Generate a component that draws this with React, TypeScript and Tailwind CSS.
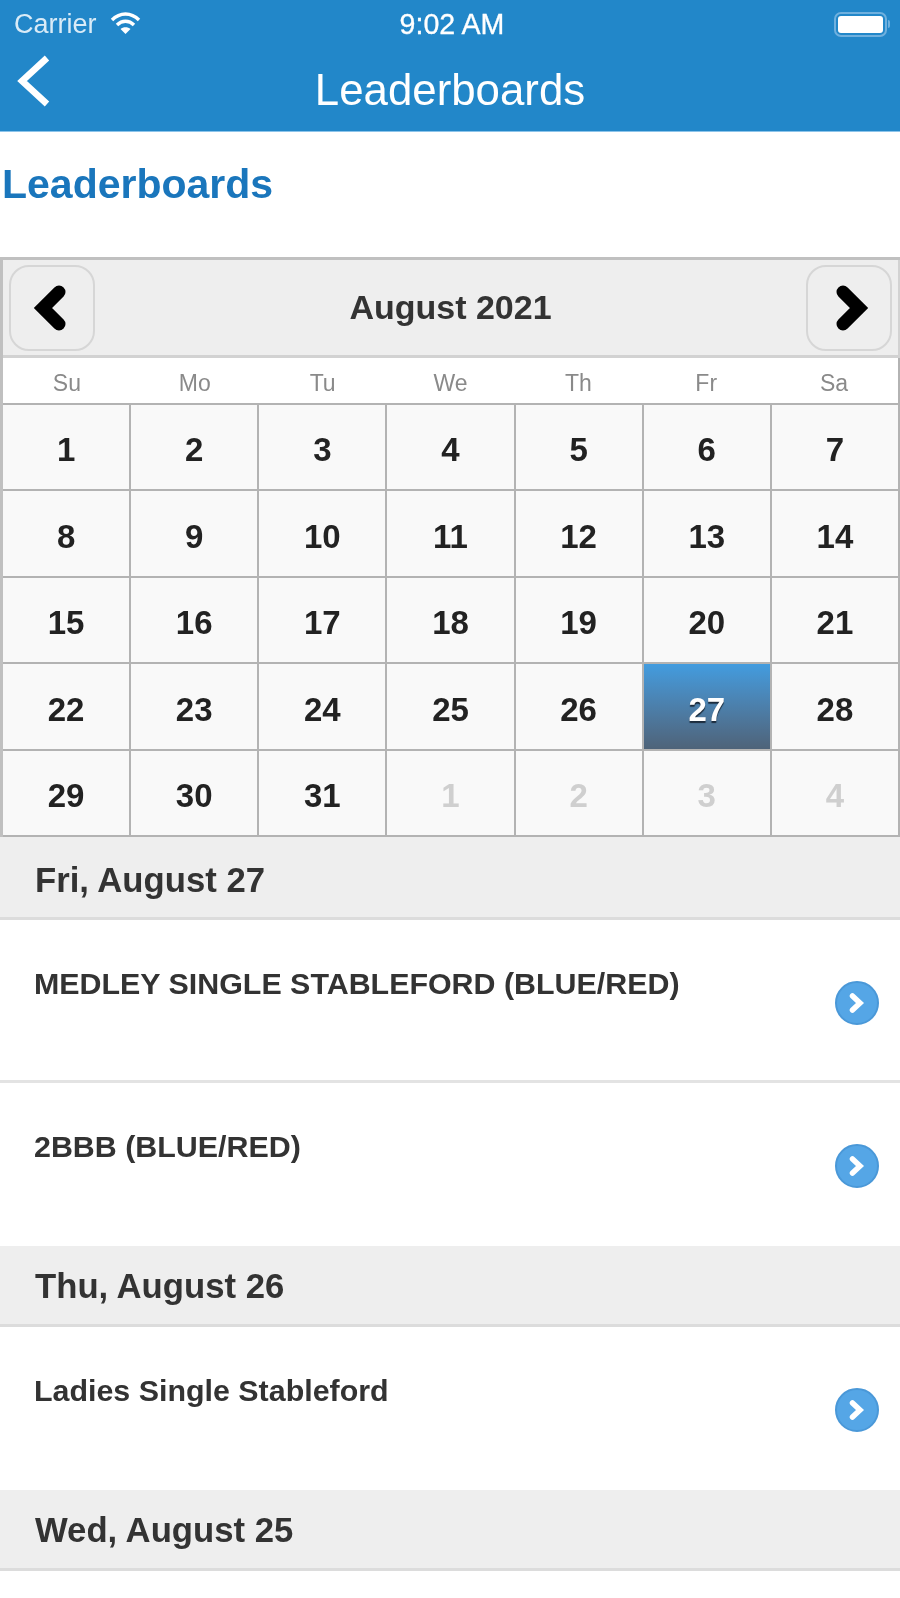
const FONT = "font-['Liberation_Sans',Arial,sans-serif]";

const WEEKDAYS = ["Su", "Mo", "Tu", "We", "Th", "Fr", "Sa"];

const DAYS = [
  ...Array.from({ length: 31 }, (_, i) => ({ label: i + 1, muted: false })),
  ...[1, 2, 3, 4].map((n) => ({ label: n, muted: true })),
];

function Chevron({ dir }: { dir: "left" | "right" }) {
  return (
    <svg width="40" height="52" viewBox="0 0 40 52" className={dir === "left" ? "-translate-x-[2px]" : "translate-x-[3px]"}>
      <path
        d={dir === "left" ? "M29 10 L13 26 L29 42" : "M11 10 L27 26 L11 42"}
        fill="none"
        stroke="#000"
        strokeWidth="13"
        strokeLinecap="round"
        strokeLinejoin="miter"
      />
    </svg>
  );
}

function Go() {
  return (
    <div className="flex h-[44px] w-[44px] items-center justify-center rounded-full border-2 border-[#4a98d8] bg-[#55a6e6]">
      <svg width="20" height="24" viewBox="0 0 20 24">
        <path d="M5.5 5 L13 12 L5.5 19" fill="none" stroke="#fff" strokeWidth="5.5" strokeLinecap="round" />
      </svg>
    </div>
  );
}

function SectionHead({ children, box }: { children: string; box: string }) {
  return (
    <div className={`flex items-center border-b-[3px] border-[#dcdcdc] bg-[#eeeeee] pl-[35px] text-[34.7px] font-bold text-[#333333] ${box}`}>
      {children}
    </div>
  );
}

function Row({ title, divider }: { title: string; divider?: boolean }) {
  return (
    <div className={`flex items-start justify-between bg-white pl-[34px] pr-[21px] ${divider ? "h-[163px] border-b-[3px] border-[#e3e3e3]" : "h-[163px]"}`}>
      <div className="pt-[41px] text-[30.4px] font-bold text-[#333333]">{title}</div>
      <div className="pt-[61px]">
        <Go />
      </div>
    </div>
  );
}

export default function App() {
  return (
    <div className={`h-[1598px] w-[900px] overflow-hidden bg-white blur-[0.5px] ${FONT}`}>
      {/* Status bar and nav */}
      <div className="h-[132px] border-b border-[#8cc4ea] bg-[#2287c9] text-white">
        <div className="flex h-[48px] items-center justify-between pl-[14px] pr-[10px]">
          <div className="flex w-[300px] items-center gap-[13px] text-[27px] text-[#d9ebf7]">
            <span>Carrier</span>
            <svg width="31" height="23" viewBox="0 0 31 23" className="-mt-[2px]">
              <path d="M2 8 C10 0 21 0 29 8" fill="none" stroke="#fff" strokeWidth="3.4" />
              <path d="M7 13 C12 8 19 8 24 13" fill="none" stroke="#fff" strokeWidth="3.4" />
              <path d="M15.5 22 L10.5 17 C13 14.5 18 14.5 20.5 17 Z" fill="#fff" />
            </svg>
          </div>
          <span className="text-[28.6px] font-normal [-webkit-text-stroke:0.3px_white]">9:02 AM</span>
          <div className="flex w-[300px] items-center justify-end">
            <div className="rounded-[7px] border-2 border-[#6fb0de] p-[2px]">
              <div className="h-[17px] w-[45px] rounded-[3px] bg-white" />
            </div>
            <div className="ml-[1px] h-[8px] w-[2px] rounded-r bg-[#6fb0de]" />
          </div>
        </div>
        <div className="relative flex h-[83px] items-center justify-center text-[43.8px] font-normal">
          <span>Leaderboards</span>
          <svg width="36" height="56" viewBox="0 0 36 56" className="absolute left-[16px] top-[6px]">
            <path d="M31 4 L6 27 L31 50" fill="none" stroke="#fff" strokeWidth="6.5" />
          </svg>
        </div>
      </div>

      {/* Page title */}
      <div className="flex h-[125px] items-start pl-[2px] pt-[28px] text-[41px] leading-[48px] font-bold text-[#1a76bc]">
        Leaderboards
      </div>

      {/* Calendar */}
      <div className="border-l-[3px] border-t-[3px] border-[#c0c0c0]">
        <div className="flex h-[98px] items-center justify-between border-b-[3px] border-r-[2px] border-[#d2d2d2] bg-[#eeeeee] px-[6px]">
          <div className="flex h-[86px] w-[86px] items-center justify-center rounded-[20px] border-2 border-[#d6d6d6]">
            <Chevron dir="left" />
          </div>
          <span className="text-[34px] font-bold text-[#333333]">August 2021</span>
          <div className="flex h-[86px] w-[86px] items-center justify-center rounded-[20px] border-2 border-[#d6d6d6]">
            <Chevron dir="right" />
          </div>
        </div>
        <div className="grid h-[47px] grid-cols-7 border-b-[2px] border-r-[2px] border-[#b3b3b3] bg-white">
          {WEEKDAYS.map((d) => (
            <div key={d} className="flex items-center justify-center pt-[6px] text-[23px] text-[#8a8a8a]">
              {d}
            </div>
          ))}
        </div>
        <div className="grid grid-cols-7">
          {DAYS.map((day, i) =>
            i === 26 ? (
              <div
                key={i}
                className="flex h-[86.4px] items-center justify-center border-b-[2px] border-r-[2px] border-[#b3b3b3] bg-gradient-to-b from-[#429cdf] to-[#4e6379] pt-[6px] text-[33px] font-bold text-white [text-shadow:0_2px_1px_#1c2c3c]"
              >
                {day.label}
              </div>
            ) : (
              <div
                key={i}
                className={`flex h-[86.4px] items-center justify-center border-b-[2px] border-r-[2px] border-[#b3b3b3] bg-[#f9f9f9] pt-[6px] text-[33px] font-bold ${
                  day.muted ? "text-[#cfcfcf]" : "text-[#222222]"
                }`}
              >
                {day.label}
              </div>
            )
          )}
        </div>
      </div>

      {/* Leaderboard list */}
      <SectionHead box="h-[83px] pt-[6px]">Fri, August 27</SectionHead>
      <Row title="MEDLEY SINGLE STABLEFORD (BLUE/RED)" divider />
      <Row title="2BBB (BLUE/RED)" />
      <SectionHead box="h-[81px] pt-[2px]">Thu, August 26</SectionHead>
      <Row title="Ladies Single Stableford" />
      <SectionHead box="h-[81px] pt-[2px]">Wed, August 25</SectionHead>
    </div>
  );
}
